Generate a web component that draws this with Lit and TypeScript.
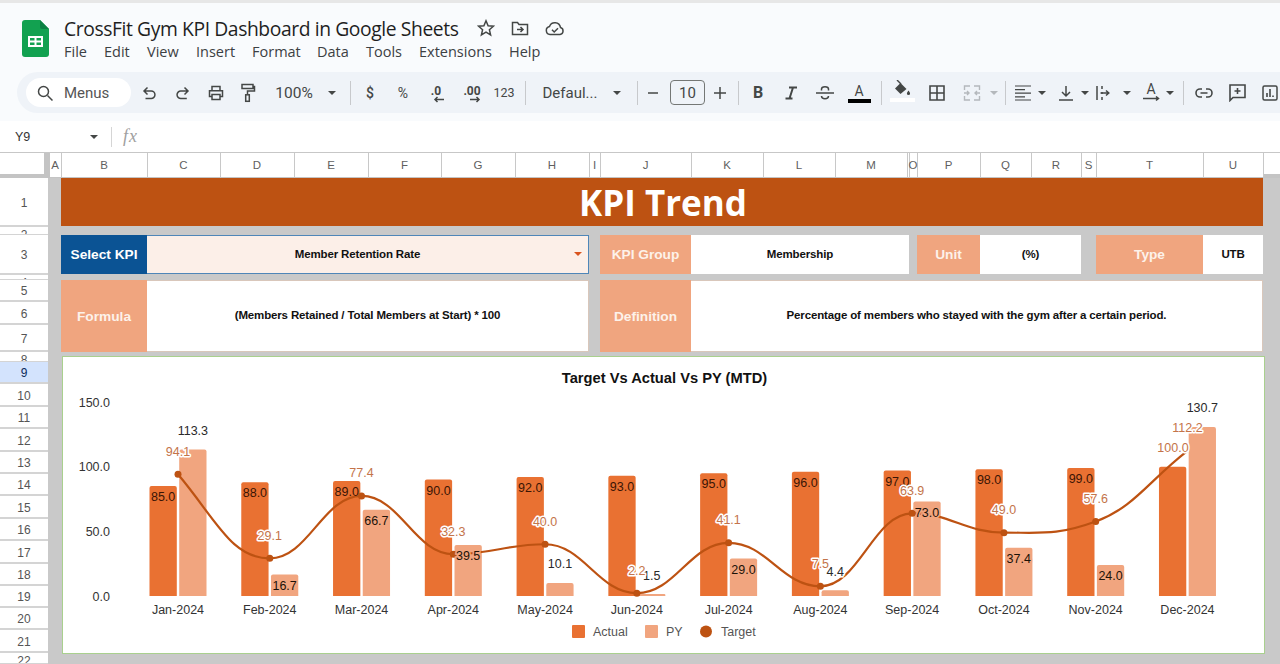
import { LitElement, html, css, svg } from "lit";
import { customElement } from "lit/decorators.js";

const ICON = "#444746";
const caret = (c = ICON) => html`<svg class="caret" width="8" height="4" viewBox="0 0 8 4"><path d="M0 0h8L4 4z" fill=${c}/></svg>`;
const ic = (w: number, h: number, body: unknown) =>
  html`<svg width=${w} height=${h} viewBox="0 0 ${w} ${h}" fill="none" stroke=${ICON} stroke-width="1.5">${body}</svg>`;

type Tool = [number, unknown];
const sep = html`<span class="sep"></span>`;
const t = (s: string, cls = "") => html`<span class="tt ${cls}">${s}</span>`;
const tools: Tool[] = [
  [149, ic(16, 16, svg`<path d="M6.5 2.5 3 6l3.5 3.5M3 6h7.2a3.7 3.7 0 0 1 0 7.5H4.5"/>`)],
  [183, ic(16, 16, svg`<path d="M9.5 2.5 13 6 9.5 9.5M13 6H5.8a3.7 3.7 0 0 0 0 7.5h6"/>`)],
  [215.5, ic(18, 18, svg`<path d="M5 6V2.5h8V6M5 12.5H2.5V6.8h13v5.7H13M5 10.5h8v5H5z"/>`)],
  [248, ic(16, 20, svg`<path d="M2 1.5h11v4H2zM13 3.5h1.5v4.5H7.5v3.5"/><rect x="5.7" y="11.8" width="3.6" height="6.5"/>`)],
  [294, t("100%", "big")],
  [332, caret()],
  [350, sep],
  [370, t("$", "b13")],
  [403, t("%", "s13")],
  [436, html`<span class="dec"><span>.0</span>${ic(12, 7, svg`<path d="M11 3.5H2M4.5 1 2 3.5 4.5 6"/>`)}</span>`],
  [472, html`<span class="dec"><span>.00</span>${ic(12, 7, svg`<path d="M1 3.5h9M7.5 1 10 3.5 7.5 6"/>`)}</span>`],
  [504, t("123", "s12")],
  [525, sep],
  [570, t("Defaul...", "big2")],
  [617, caret()],
  [637, sep],
  [653, ic(10, 2, svg`<path d="M0 1h10"/>`)],
  [687.5, html`<span class="fs">10</span>`],
  [720, ic(12, 12, svg`<path d="M0 6h12M6 0v12"/>`)],
  [738, sep],
  [758, t("B", "bold-b")],
  [791, ic(14, 14, svg`<path d="M5 1.500h8M1.500 12.500h7M9 1.500 5.500 12.500" stroke-width="2"/>`)],
  [825, ic(18, 16, svg`<path d="M0 8h18M5.5 5.5V4c0-3 7-3 7 0v1.5M5.5 11c0 3.5 7 3.500 7 0" />`)],
  [859, html`<span class="colorA"><span>A</span><i></i></span>`],
  [881, sep],
  [902, html`<span class="fill"><svg width="17" height="16" viewBox="0 0 17 16"><path d="M3 0 7 4" stroke=${ICON} stroke-width="1.4"/><path d="M6.500 3 12.500 9 6.500 14 1 8.500z" fill=${ICON}/><path d="M14.500 10.500c1 1.500 1.600 2.200 1.600 3a1.600 1.600 0 0 1-3.200 0c0-.8.600-1.500 1.600-3z" fill=${ICON}/></svg><i></i></span>`],
  [937, ic(16, 16, svg`<path d="M1 1h14v14H1zM8 1v14M1 8h14" stroke-width="1.6"/>`)],
  [972, html`<svg width="18" height="18" viewBox="0 0 18 18" fill="none" stroke="#b4b8bc" stroke-width="1.4"><path d="M7 2H1.500v4M1.500 12v4H7M11 2h5.500v4M16.500 12v4H11M1 9h5M4 7l2 2-2 2M17 9h-5M14 7l-2 2 2 2"/></svg>`],
  [994, caret("#b4b8bc")],
  [1005, sep],
  [1023, ic(16, 16, svg`<path d="M0 1h16M0 4.600h10M0 8.200h16M0 11.800h10M0 15h16" stroke-width="1.2"/>`)],
  [1042, caret()],
  [1066, ic(14, 16, svg`<path d="M7 1v9.500M3 7l4 4 4-4M0 15h14"/>`)],
  [1085, caret()],
  [1103, ic(14, 16, svg`<path d="M1 1v14M6 1v3M6 7v2M6 12v3M4.500 8h8M10 5.500 12.800 8 10 10.500"/>`)],
  [1127, caret()],
  [1151, html`<span class="rot"><span>A</span>${ic(17, 6, svg`<path d="M0 2.500h15M13 .5l2.500 2-2.500 2"/>`)}</span>`],
  [1170, caret()],
  [1183, sep],
  [1204, ic(18, 10, svg`<path d="M7 1H5a4 4 0 0 0 0 8h2M11 1h2a4 4 0 0 1 0 8h-2M5.500 5h7" stroke-width="1.6"/>`)],
  [1237, ic(17, 18, svg`<path d="M1 1h15v12.500H4L1 16.500zM8.500 4v6M5.500 7h6" stroke-width="1.6"/>`)],
  [1270, ic(16, 16, svg`<rect x="1" y="1" width="14" height="14" rx="1.500"/><path d="M5 12V8M8 12V4M11 12v-1.500" stroke-width="1.6"/>`)],
];

const columns = ["A","B","C","D","E","F","G","H","I","J","K","L","M","","O","P","Q","R","S","T","U"];
const rowsHead: [string, number, string][] = [
  ["1",49,""],["2",8,"cut"],["3",40,""],["4",5,"cut"],["5",22,""],["6",23,""],["7",27,""],["8",10,"cut"],
  ["9",22,"sel"],["10",23,""],["11",22,""],["12",23,""],["13",22,""],["14",22,""],["15",23,""],["16",22,""],
  ["17",23,""],["18",22,""],["19",22,""],["20",22,""],["21",23,""],["22",11,"cut"],
];

const months = ["Jan","Feb","Mar","Apr","May","Jun","Jul","Aug","Sep","Oct","Nov","Dec"];
const actual = [85,88,89,90,92,93,95,96,97,98,99,100];
const py = [113.3,16.7,66.7,39.5,10.1,1.5,29,4.4,73,37.4,24,130.7];
const target = [94.1,29.1,77.4,32.3,40,2.2,41.1,7.5,63.9,49,57.6,112.2];
const BASE = 596, K = 194 / 150, STEP = 91.77, X0 = 178, BW = 27.3, GAP = 1.2;
const cx = (i: number) => X0 + STEP * i;
const yv = (v: number) => BASE - v * K;

function curve(): string {
  const p = target.map((v, i) => [cx(i), yv(v)]);
  const d = p.slice(1).map((q, i) => (q[1] - p[i][1]) / STEP);
  const m = p.map((_, i) => {
    if (i === 0) return d[0] * 1.3;
    if (i === p.length - 1) return d[i - 1];
    if (d[i - 1] * d[i] <= 0) return 0;
    const avg = (d[i - 1] + d[i]) / 2;
    return Math.sign(avg) * Math.min(Math.abs(avg), 3 * Math.abs(d[i - 1]), 3 * Math.abs(d[i]));
  });
  let s = `M${p[0][0]} ${p[0][1]}`;
  for (let i = 0; i < p.length - 1; i++) {
    const h = STEP * 0.42;
    s += `C${p[i][0] + h} ${p[i][1] + m[i] * h} ${p[i + 1][0] - h} ${p[i + 1][1] - m[i + 1] * h} ${p[i + 1][0]} ${p[i + 1][1]}`;
  }
  return s;
}

function barPath(x: number, y: number, w: number) {
  const r = Math.min(2, (BASE - y) / 2);
  return `M${x} ${BASE}V${y + r}Q${x} ${y} ${x + r} ${y}H${x + w - r}Q${x + w} ${y} ${x + w} ${y + r}V${BASE}z`;
}

function chart() {
  return html`<svg class="plot" viewBox="63 357 1201 296" width="1201" height="296">
    <text x="664.500" y="383" class="title" text-anchor="middle">Target Vs Actual Vs PY (MTD)</text>
    ${[150, 100, 50, 0].map((v) => svg`<text x="110" y=${yv(v) + 4.500} class="ax" text-anchor="end">${v.toFixed(1)}</text>`)}
    ${months.map((mo, i) => svg`
      <path class="a" d=${barPath(cx(i) - GAP - BW, yv(actual[i]), BW)}/>
      <path class="p" d=${barPath(cx(i) + GAP, yv(py[i]), BW)}/>
      <text x=${cx(i)} y="613.500" class="ax" text-anchor="middle">${mo}-2024</text>`)}
    <path d=${curve()} fill="none" stroke="#bd5212" stroke-width="2.200"/>
    ${target.map((v, i) => i < 11 ? svg`<circle cx=${cx(i)} cy=${yv(v)} r="3.500" fill="#bd5212"/>` : "")}
    ${actual.map((v, i) => i === 11 ? "" : svg`<text x=${cx(i) - GAP - BW / 2} y=${yv(v) + 15} class="lab ona" text-anchor="middle">${v.toFixed(1)}</text>`)}
    ${py.map((v, i) => {
      const outside = v > 100 || v < 15;
      const y = outside ? yv(v) - 14.500 : yv(v) + 15.500;
      const cls = outside ? "lab halo-w" : "lab halo-p";
      return svg`<text x=${cx(i) + GAP + BW / 2} y=${y} class=${cls} text-anchor="middle">${v.toFixed(1)}</text>`;
    })}
    <text x="1173" y="452" class="lab tg" text-anchor="middle">100.0</text>
    ${target.map((v, i) => svg`<text x=${cx(i)} y=${yv(v) - 18.500} class="lab tg" text-anchor="middle">${v.toFixed(1)}</text>`)}
    <rect x="572" y="625" width="13" height="13" rx="1" class="a"/><text x="593" y="636" class="lg">Actual</text>
    <rect x="645" y="625" width="13" height="13" rx="1" class="p"/><text x="666" y="636" class="lg">PY</text>
    <circle cx="706" cy="631.500" r="6" fill="#bd5212"/><text x="721" y="636" class="lg">Target</text>
  </svg>`;
}

@customElement("app-root")
export class AppRoot extends LitElement {
  static styles = css`
    :host {
      display: block; width: 1280px; height: 664px; overflow: hidden; background: #fff;
      --cols: 12px 86px 73px 74px 74px 73px 74px 74px 11px 91px 72px 72px 72px 2px 8px 63px 51px 50px 15px 107px 60px 1fr;
      font-family: "Liberation Sans", Arial, sans-serif;
    }
    * { box-sizing: border-box; }
    .topline { height: 3px; background: #e7e7e7; }
    .appbar { height: 69px; background: #f9fbfd; display: flex; padding-left: 22px; }
    .logo { margin-top: 17px; flex: none; }
    .titles { margin-left: 15px; display: flex; flex-direction: column; }
    .titlerow { display: flex; align-items: center; height: 24px; margin-top: 13px; }
    .doc { font: 400 19.300px "Open Sans", sans-serif; color: #1f1f1f; letter-spacing: -.4px; white-space: nowrap; }
    .stateicons { display: flex; align-items: center; margin-left: 18px; gap: 16px; }
    .menus { display: flex; margin-top: 2px; font: 400 14.500px "Open Sans", sans-serif; color: #3c4043; height: 20px; line-height: 20px; }
    .menus span { flex: none; white-space: nowrap; }
    .tbwrap { height: 49px; background: #f9fbfd; padding-left: 17px; }
    .toolbar { height: 41px; background: #eff3f8; border-radius: 21px 0 0 21px; display: flex; align-items: center; padding-left: 9px; overflow: hidden; }
    .search { flex: none; width: 105px; height: 29px; border-radius: 15px; background: #fff; display: flex; align-items: center; padding-left: 10px; gap: 10px; font: 400 15px Roboto, sans-serif; color: #555; }
    .slot { flex: none; display: flex; align-items: center; justify-content: center; height: 41px; }
    .slot > * { flex: none; }
    .caret { display: block; }
    .sep { width: 1px; height: 24px; background: #c7c9cc; }
    .tt { font-family: Roboto, sans-serif; color: #444746; white-space: nowrap; }
    .big { font-size: 15.500px; }
    .big2 { font-size: 15px; }
    .b13 { font-size: 14px; font-weight: 500; }
    .s13 { font-size: 14px; }
    .s12 { font-size: 12.500px; }
    .bold-b { font-size: 16px; font-weight: 700; }
    .dec { display: flex; flex-direction: column; align-items: center; font: 700 12px Roboto, sans-serif; color: #444746; line-height: 11px; margin-top: 3px; }
    .dec svg { margin-left: 6px; margin-top: -1px; }
    .fs { width: 35px; height: 25px; border: 1px solid #747775; border-radius: 4px; display: flex; align-items: center; justify-content: center; font: 400 15px Roboto, sans-serif; color: #444746; }
    .colorA { display: flex; flex-direction: column; align-items: center; width: 23px; font: 400 14px Roboto, sans-serif; color: #444746; line-height: 15px; margin-top: 1px; }
    .colorA i { display: block; width: 23px; height: 4px; background: #000; }
    .fill { display: flex; flex-direction: column; align-items: center; width: 25px; margin-top: -4px; }
    .fill svg { display: block; }
    .fill i { display: block; width: 25px; height: 4px; background: #fff; margin-top: 2px; }
    .rot { display: flex; flex-direction: column; align-items: center; font: 400 14px Roboto, sans-serif; color: #444746; line-height: 13px; }
    .fxbar { height: 32px; display: flex; align-items: center; border-bottom: 1px solid #c7c7c7; background: #fff; font: 400 12.500px "Liberation Sans", sans-serif; color: #333; padding-left: 15px; }
    .namebox { width: 75px; }
    .fxdiv { width: 1px; height: 20px; background: #d5d5d5; margin-left: 13px; }
    .fx { font: italic 400 18px "Liberation Serif", serif; color: #a0a0a0; margin-left: 11px; letter-spacing: 1px; }
    .colhead { height: 25px; display: flex; background: #fff; border-bottom: 1px solid #c4c4c4; }
    .corner { width: 50px; flex: none; border-right: 6px solid #c4c4c4; border-bottom: 4px solid #c4c4c4; margin-bottom: -1px; }
    .colgrid { flex: 1; display: grid; grid-template-columns: var(--cols); }
    .colgrid div { display: flex; align-items: center; justify-content: center; border-right: 1px solid #c8c8c8; font-size: 11.500px; color: #5f5f5f; padding-right: 1px; }
    .colgrid div:last-child { border-right: 0; border-bottom: 4px solid #c4c4c4; margin-bottom: -1px; }
    .main { display: flex; height: 486px; }
    .rowhead { width: 48px; flex: none; background: #fff; overflow: hidden; }
    .rh { display: flex; align-items: center; justify-content: center; border-bottom: 2px solid #d4d4d4; padding-top: 2px; font-size: 12px; color: #555; overflow: hidden; }
    .rh.cut { align-items: flex-start; padding-top: 1px; line-height: 14px; border-bottom-width: 1px; }
    .rh.sel { background: #d3e3fd; color: #0b2a5b; }
    .sheet { flex: 1; background: #c9c9c9; display: grid; padding-left: 1px; grid-template-columns: var(--cols); grid-template-rows: 48px 9px 39px 6px 72px 4px 298px; }
    .c { display: flex; align-items: center; justify-content: center; font-weight: 700; white-space: nowrap; }
    .banner { grid-column: 2 / 22; grid-row: 1; background: #bd5212; color: #fff; font: 700 35px "Open Sans", sans-serif; padding-left: 2px; }
    .lb { background: #f0a57f; color: #fdf2ea; font-size: 13.700px; }
    .val { background: #fff; color: #111; font-size: 11.500px; letter-spacing: -.145px; padding-bottom: 2px; }
    .r3 { grid-row: 3; } .r5 { grid-row: 5; }
    .sel-l { grid-column: 2; background: #0b5394; color: #fff; }
    .sel-v { grid-column: 3 / 9; background: #fcefe8; border: 1px solid #4f86b8; border-left: 0; justify-content: flex-start; }
    .sel-v span:first-child { flex: 1; text-align: center; }
    .sel-v .caret { margin: 0 6px; }
    .g-l { grid-column: 10; } .g-v { grid-column: 11 / 15; }
    .u-l { grid-column: 16; } .u-v { grid-column: 17 / 19; }
    .t-l { grid-column: 20; } .t-v { grid-column: 21; }
    .f-l { grid-column: 2; } .f-v { grid-column: 3 / 9; }
    .d-l { grid-column: 10; } .d-v { grid-column: 11 / 22; }
    .boxed { border: 1px solid #d9c7bb; border-left: 0; }
    .chart { grid-column: 2 / 22; grid-row: 7; margin: 0 -2px 0 1px; background: #fff; border: 1px solid #a9d08e; }
    .plot { display: block; }
    .title { font: 700 14.700px "Liberation Sans", sans-serif; fill: #111; }
    .ax { font: 400 12.500px "Liberation Sans", sans-serif; fill: #333; }
    .lg { font: 400 12.500px "Liberation Sans", sans-serif; fill: #555; }
    .a { fill: #e97132; } .p { fill: #f1a57f; }
    .lab { font: 400 12.500px "Liberation Sans", sans-serif; fill: #2a2a2a; }
    .ona { fill: #3a1505; }
    .halo-w { paint-order: stroke; stroke: #fff; stroke-width: 3px; }
    .halo-p { paint-order: stroke; stroke: #f1a57f; stroke-width: 3px; fill: #1c1208; }
    .tg { paint-order: stroke; stroke: #fff; stroke-width: 3px; stroke-linejoin: round; fill: #c4744a; }
  `;

  private toolSlots() {
    let b = 131;
    return tools.map(([c, body]) => {
      const w = 2 * (c - b);
      b += w;
      return html`<div class="slot" style="width:${w}px">${body}</div>`;
    });
  }

  render() {
    const menu: [string, number][] = [["File",40],["Edit",43],["View",49],["Insert",56],["Format",65],["Data",49],["Tools",53],["Extensions",90],["Help",31]];
    return html`
      <div class="topline"></div>
      <div class="appbar">
        <svg class="logo" width="27" height="37" viewBox="0 0 27 37">
          <path d="M3 0h15l9 9v25a3 3 0 0 1-3 3H3a3 3 0 0 1-3-3V3a3 3 0 0 1 3-3z" fill="#12a150"/>
          <path d="M18 0l9 9h-7a2 2 0 0 1-2-2z" fill="#0b8043"/>
          <path d="M6 16h15v11H6z" fill="#fff"/>
          <path d="M8 18h4.500v2.500H8zM14.500 18H19v2.500h-4.500zM8 22.500h4.500V25H8zM14.500 22.500H19V25h-4.500z" fill="#12a150"/>
        </svg>
        <div class="titles">
          <div class="titlerow">
            <span class="doc">CrossFit Gym KPI Dashboard in Google Sheets</span>
            <span class="stateicons">
              ${ic(18, 18, svg`<path d="M9 1.800l2.100 4.900 5.300.5-4 3.500 1.200 5.200L9 13.200l-4.600 2.700 1.200-5.200-4-3.500 5.300-.5z"/>`)}
              ${ic(18, 16, svg`<path d="M1.500 2.500h5l1.500 2h8.500v10h-15zM6 9.500h6M9.500 7l2.500 2.500L9.500 12"/>`)}
              ${ic(20, 15, svg`<path d="M5 13.500a4 4 0 0 1-.5-7.900 5.700 5.700 0 0 1 11 .9 3.600 3.600 0 0 1-.5 7zM7 8.800l2.200 2.200 3.800-3.800"/>`)}
            </span>
          </div>
          <div class="menus">${menu.map(([m, w]) => html`<span style="width:${w}px">${m}</span>`)}</div>
        </div>
      </div>
      <div class="tbwrap">
        <div class="toolbar">
          <div class="search">
            ${ic(18, 18, svg`<circle cx="7.500" cy="7.500" r="5"/><path d="m11.500 11.500 5 5"/>`)}
            <span>Menus</span>
          </div>
          ${this.toolSlots()}
        </div>
      </div>
      <div class="fxbar">
        <span class="namebox">Y9</span>${caret()}
        <span class="fxdiv"></span><span class="fx">fx</span>
      </div>
      <div class="colhead">
        <div class="corner"></div>
        <div class="colgrid">
          ${columns.map((c) => html`<div>${c}</div>`)}
          <div></div>
        </div>
      </div>
      <div class="main">
        <div class="rowhead">
          ${rowsHead.map(([r, h, k]) => html`<div class="rh ${k}" style="height:${h}px">${r}</div>`)}
        </div>
        <div class="sheet">
          <div class="c banner">KPI Trend</div>
          <div class="c lb r3 sel-l">Select KPI</div>
          <div class="c val r3 sel-v"><span>Member Retention Rate</span>${caret("#d9541e")}</div>
          <div class="c lb r3 g-l">KPI Group</div><div class="c val r3 g-v">Membership</div>
          <div class="c lb r3 u-l">Unit</div><div class="c val r3 u-v">(%)</div>
          <div class="c lb r3 t-l">Type</div><div class="c val r3 t-v">UTB</div>
          <div class="c lb r5 f-l">Formula</div><div class="c val r5 f-v boxed">(Members Retained / Total Members at Start) * 100</div>
          <div class="c lb r5 d-l">Definition</div><div class="c val r5 d-v boxed">Percentage of members who stayed with the gym after a certain period.</div>
          <div class="chart">${chart()}</div>
        </div>
      </div>
    `;
  }
}
